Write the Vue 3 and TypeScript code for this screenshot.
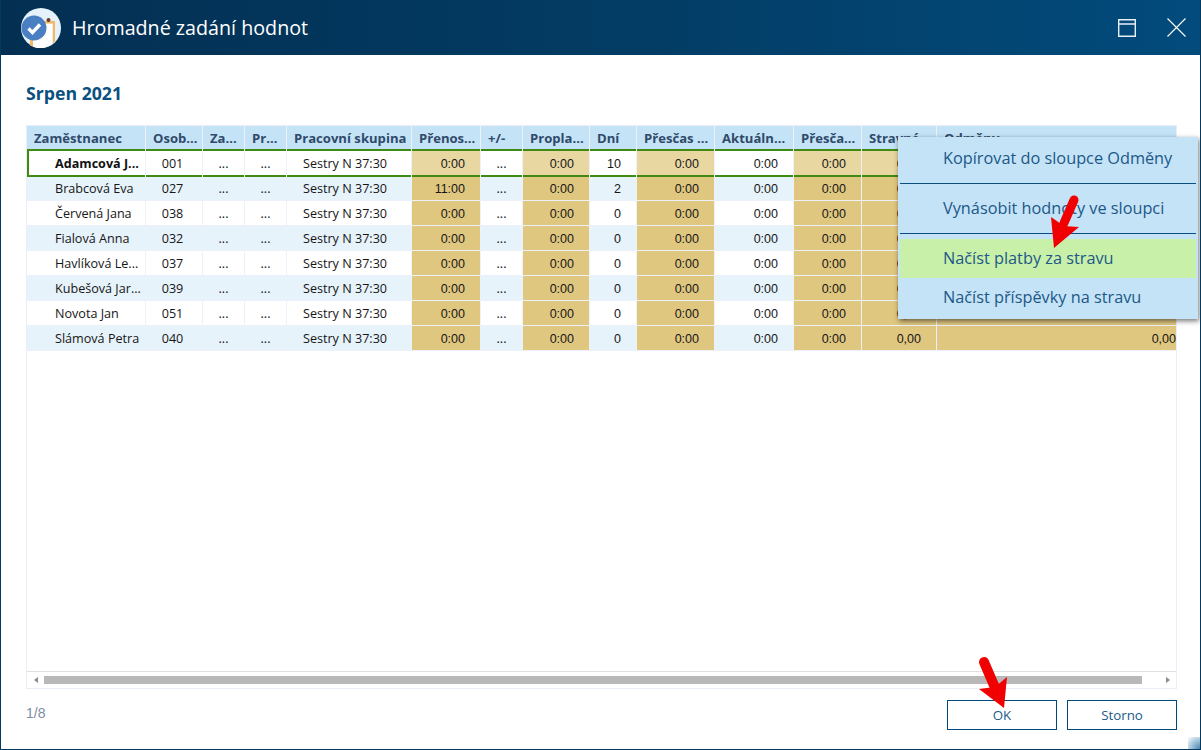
<script setup lang="ts">
interface Row { name: string; id: string; carry: string; days: string; last: string }
const rows: Row[] = [
  { name: 'Adamcová J...', id: '001', carry: '0:00', days: '10', last: '' },
  { name: 'Brabcová Eva', id: '027', carry: '11:00', days: '2', last: '' },
  { name: 'Červená Jana', id: '038', carry: '0:00', days: '0', last: '' },
  { name: 'Fialová Anna', id: '032', carry: '0:00', days: '0', last: '' },
  { name: 'Havlíková Le...', id: '037', carry: '0:00', days: '0', last: '' },
  { name: 'Kubešová Jar...', id: '039', carry: '0:00', days: '0', last: '' },
  { name: 'Novota Jan', id: '051', carry: '0:00', days: '0', last: '' },
  { name: 'Slámová Petra', id: '040', carry: '0:00', days: '0', last: '0,00' }
]
const headers = ['Zaměstnanec', 'Osob...', 'Za...', 'Pr...', 'Pracovní skupina', 'Přenos...', '+/-', 'Propla...', 'Dní', 'Přesčas ...', 'Aktuáln...', 'Přesča...', 'Stravné', 'Odměny']
</script>

<template>
  <div class="window">
    <header class="titlebar">
      <svg class="logo" width="40" height="40" viewBox="0 0 40 40">
        <circle cx="20" cy="20" r="20" fill="#e6f2fb" />
        <path d="M9 28V37.500L12 38.700V28Z" fill="#f2b866" />
        <path d="M31.500 13H34V33.500L31.500 35.500Z" fill="#f2b866" />
        <path d="M12 15H31.500V35.800A20 20 0 0 1 12 38.800Z" fill="#fff" />
        <rect x="21" y="13" width="13" height="2.600" fill="#f2b866" />
        <circle cx="27.500" cy="12" r="2" fill="#6b3a2a" />
        <circle cx="13" cy="20" r="12.500" fill="#4a7fc1" />
        <path d="M7.500 20.500l4 4 7.500-8" fill="none" stroke="#fff" stroke-width="3.400" />
      </svg>
      <h1 class="title">Hromadné zadání hodnot</h1>
      <div class="controls">
        <svg width="18" height="18" viewBox="0 0 18 18"><path d="M.7.7h16.600v16.600H.7Z M.7 5h16.600" fill="none" stroke="#e8f0f6" stroke-width="1.400" /></svg>
        <svg width="19" height="19" viewBox="0 0 19 19"><path d="M.5.500l18 18M18.500.500l-18 18" fill="none" stroke="#fff" stroke-width="1.100" /></svg>
      </div>
    </header>

    <main class="body">
      <h2 class="month">Srpen 2021</h2>
      <section class="grid-frame">
        <div class="grid-scroll">
          <div class="line head">
            <div v-for="h in headers" :key="h" class="hcell">{{ h }}</div>
          </div>
          <div v-for="(r, i) in rows" :key="r.id" class="line row" :class="{ selected: i === 0, alt: i % 2 === 1 }">
            <div class="cell name">{{ r.name }}</div>
            <div class="cell center idc">{{ r.id }}</div>
            <div class="cell center">...</div>
            <div class="cell center">...</div>
            <div class="cell group">Sestry N 37:30</div>
            <div class="cell num tan">{{ r.carry }}</div>
            <div class="cell center">...</div>
            <div class="cell num tan">0:00</div>
            <div class="cell num days">{{ r.days }}</div>
            <div class="cell num tan">0:00</div>
            <div class="cell num">0:00</div>
            <div class="cell num tan">0:00</div>
            <div class="cell num tan">0,00</div>
            <div class="cell num tan edge">{{ r.last }}</div>
          </div>
        </div>
        <div class="hscroll">
          <span class="arrow left"></span>
          <div class="track"><div class="thumb"></div></div>
          <span class="arrow right"></span>
        </div>
      </section>
      <footer class="footer">
        <span class="pager">1/8</span>
        <div class="buttons">
          <button class="btn">OK</button>
          <button class="btn">Storno</button>
        </div>
      </footer>
    </main>

    <nav class="menu">
      <div class="mi first">Kopírovat do sloupce Odměny</div>
      <div class="sep"></div>
      <div class="mi second">Vynásobit hodnoty ve sloupci</div>
      <div class="sep"></div>
      <div class="mi hot">Načíst platby za stravu</div>
      <div class="mi last">Načíst příspěvky na stravu</div>
    </nav>

    <div class="corner"></div>

    <svg class="pointer p1" width="44" height="60" viewBox="0 0 44 60">
      <path d="M29 11L19 34" stroke="#f00000" stroke-width="9" stroke-linecap="round" fill="none" />
      <path d="M6 28L19 37L34 38L9 59Z" fill="#f00000" />
    </svg>
    <svg class="pointer p2" width="44" height="70" viewBox="0 0 44 70">
      <path d="M11 11L23 39" stroke="#f00000" stroke-width="10" stroke-linecap="round" fill="none" />
      <path d="M6 38L22 36L34 26L31 57Z" fill="#f00000" />
    </svg>
  </div>
</template>

<style>
html, body { margin: 0; background: #fff; }
</style>

<style scoped>
.window {
  position: relative;
  width: 1201px;
  height: 750px;
  box-sizing: border-box;
  display: flex;
  flex-direction: column;
  overflow: hidden;
  background: #fff;
  font-family: "Open Sans", sans-serif;
  border: 1px solid #03395f;
  border-top: 0;
}
.titlebar {
  height: 55px;
  flex: none;
  margin: 0 -1px;
  display: flex;
  align-items: center;
  padding: 0 15px 0 21px;
  background: linear-gradient(90deg, #032f52 0%, #033a61 45%, #024b7c 100%);
  color: #fff;
}
.logo { flex: none; }
.title {
  margin: 0 0 0 11px;
  font-size: 19.700px;
  font-weight: 400;
}
.controls { margin-left: auto; display: flex; align-items: center; gap: 31px; }
.controls svg { display: block; }
.body {
  flex: 1;
  display: flex;
  flex-direction: column;
  padding: 0 23px 0 25px;
  min-height: 0;
}
.month {
  margin: 26px 0 0;
  height: 44px;
  line-height: 24px;
  font-size: 17.700px;
  font-weight: 700;
  color: #0a5080;
}
.grid-frame {
  height: 564px;
  box-sizing: border-box;
  border: 1px solid #e9eef8;
  display: flex;
  flex-direction: column;
  overflow: hidden;
}
.grid-scroll { flex: 1; min-height: 0; overflow: hidden; }
.line {
  display: grid;
  grid-template-columns: 119px 57px 42px 42px 125px 69px 42px 67px 47px 78px 79px 68px 75px 240px;
  width: 1150px;
}
.head { height: 25px; background: #c5e3f6; }
.hcell {
  box-sizing: border-box;
  padding-left: 7px;
  font-size: 13.100px;
  font-weight: 700;
  line-height: 24px;
  color: #2f4a6b;
  white-space: nowrap;
  overflow: hidden;
  border-right: 1px solid #edf1fa;
}
.row { height: 25px; position: relative; }
.row.alt { background: #e6f3fb; }
.cell {
  box-sizing: border-box;
  height: 25px;
  font-size: 12.600px;
  line-height: 25px;
  color: #161616;
  border-right: 1px solid #edf1fa;
  border-bottom: 1px solid #edf1fa;
  white-space: nowrap;
  overflow: hidden;
}
.name { padding-left: 28px; }
.center { text-align: center; }
.idc { padding-right: 3px; }
.group { padding-left: 16px; }
.num {
  font-family: "Liberation Sans", sans-serif;
  font-size: 12.500px;
  line-height: 27px;
  text-align: right;
  padding-right: 15px;
}
.edge { padding-right: 0; }
.tan { background: #e0c780; }
.selected {
  z-index: 1;
  height: 28px;
  margin: -2px 0 -1px;
}
.selected .cell {
  height: 28px;
  line-height: 29px;
  border-bottom: 0;
  box-shadow: inset 0 2px #3f8a12, inset 0 -2px #3f8a12;
}
.selected .num { line-height: 31px; }
.selected .tan { background: #e8d7a0; }
.selected .name {
  font-weight: 700;
  color: #111;
  box-shadow: inset 0 2px #3f8a12, inset 0 -2px #3f8a12, inset 2px 0 #3f8a12;
}
.hscroll {
  height: 17px;
  flex: none;
  border-top: 1px solid #dfdfe3;
  display: flex;
  align-items: center;
  box-sizing: border-box;
}
.arrow { width: 0; height: 0; border: 3px solid transparent; flex: none; }
.arrow.left { border-right: 4px solid #8a8a8a; border-left: 0; margin-left: 7px; }
.arrow.right { border-left: 4px solid #8a8a8a; border-right: 0; margin-right: 6px; }
.track { flex: 1; padding: 0 20px 0 6px; }
.thumb { height: 8px; width: 1098px; background: #b8b8b8; }
.footer {
  flex: 1;
  display: flex;
  align-items: flex-start;
  justify-content: space-between;
  padding-top: 11px;
}
.pager {
  margin-top: 5px;
  font-family: "Liberation Sans", sans-serif;
  font-size: 14px;
  color: #7d8ea3;
}
.buttons { display: flex; gap: 10px; }
.btn {
  width: 110px;
  height: 30px;
  box-sizing: border-box;
  border: 1.500px solid #004b7c;
  background: #fff;
  color: #215b8b;
  font-family: "Open Sans", sans-serif;
  font-size: 13.300px;
  padding: 0 0 1px;
}
.menu {
  position: absolute;
  z-index: 5;
  left: 897px;
  top: 137px;
  width: 300px;
  height: 182px;
  box-sizing: border-box;
  padding: 0 2px;
  background: #c5e3f6;
  box-shadow: 1px 2px 5px rgba(0, 0, 0, 0.55);
  color: #1c5888;
  font-size: 16.300px;
}
.mi { padding-left: 43px; white-space: nowrap; }
.first { height: 46px; line-height: 43px; }
.second { height: 49px; line-height: 48px; }
.sep { height: 1px; background: #0b4f7e; }
.sep + .mi.hot { margin-top: 5px; }
.hot { height: 39px; line-height: 38px; background: #c8f0a8; }
.last { height: 40px; line-height: 38px; }
.corner {
  position: absolute;
  right: 0;
  bottom: 0;
  width: 12px;
  height: 12px;
  background: radial-gradient(circle at 100% 100%, #4f86ad 0, #a8c8de 55%, rgba(255, 255, 255, 0) 100%);
}
.pointer { position: absolute; z-index: 6; pointer-events: none; }
.p1 { left: 1044px; top: 189px; }
.p2 { left: 972px; top: 651px; }
</style>
